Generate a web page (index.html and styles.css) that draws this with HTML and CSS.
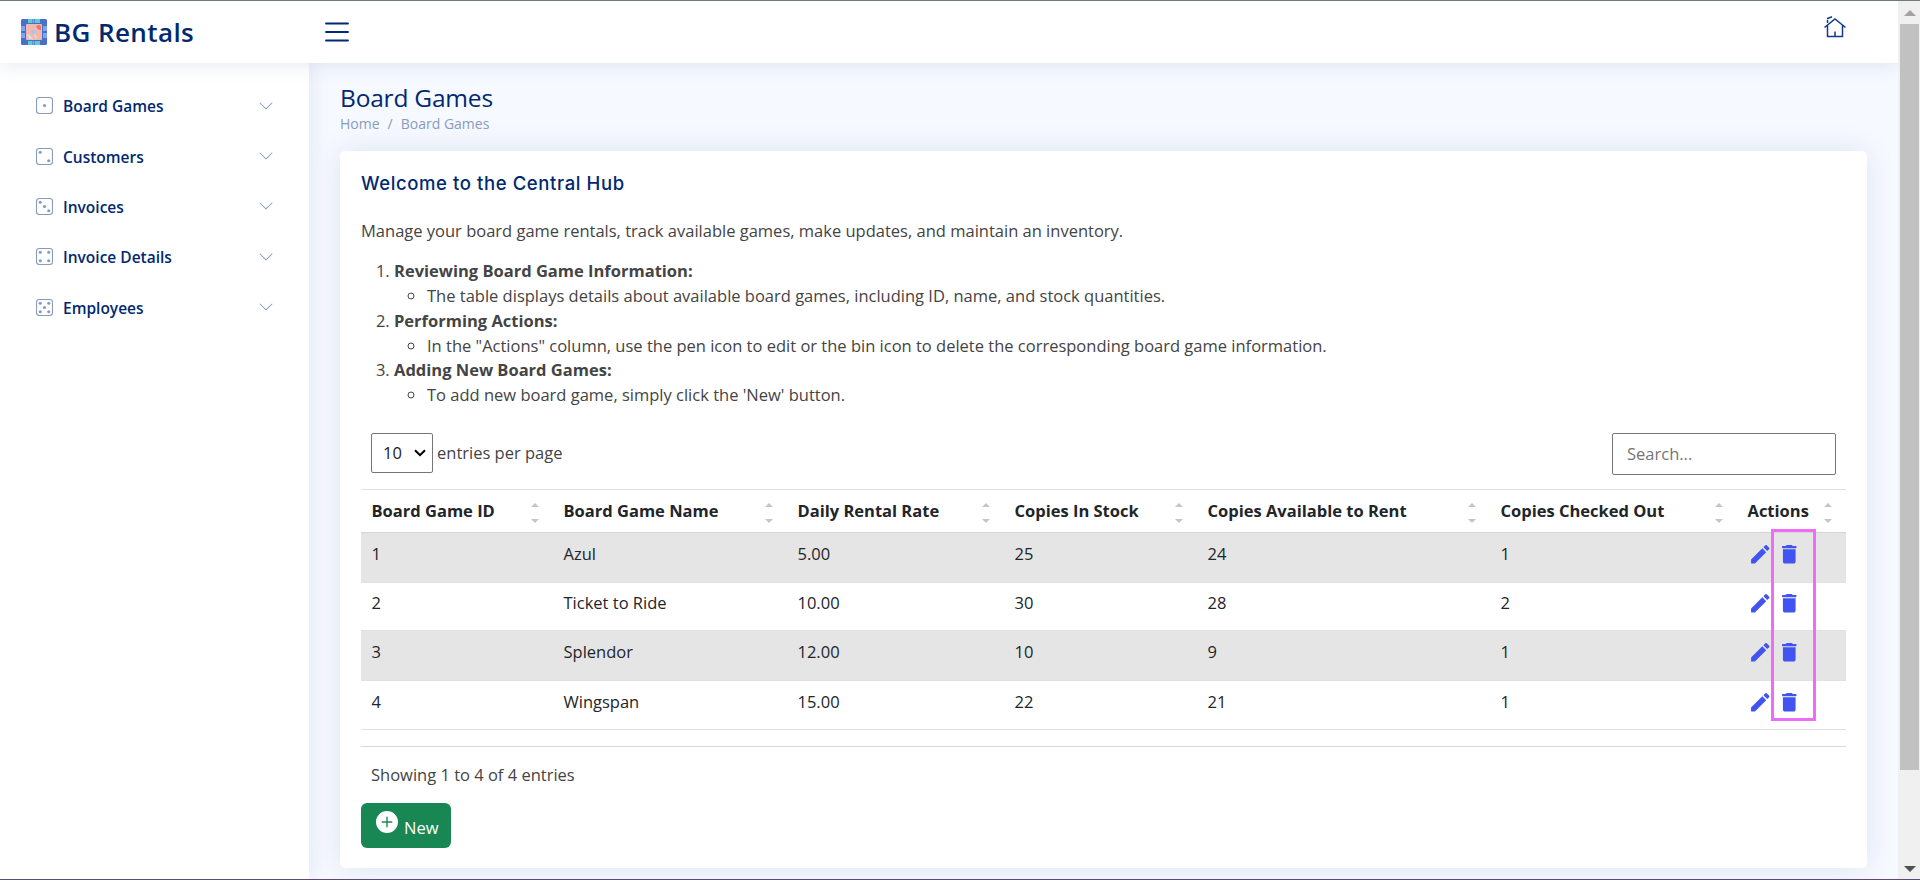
FILE: index.html
```html
<!DOCTYPE html>
<html lang="en">
<head>
<meta charset="utf-8">
<title>BG Rentals</title>
<link rel="stylesheet" href="styles.css">
</head>
<body>
<svg class="sprite" aria-hidden="true">
  <symbol id="chevron" viewBox="0 0 16 16"><path fill-rule="evenodd" d="M1.646 4.646a.5.5 0 0 1 .708 0L8 10.293l5.646-5.647a.5.5 0 0 1 .708.708l-6 6a.5.5 0 0 1-.708 0l-6-6a.5.5 0 0 1 0-.708z"/></symbol>
  <symbol id="die" viewBox="0 0 16 16"><path d="M13 1a2 2 0 0 1 2 2v10a2 2 0 0 1-2 2H3a2 2 0 0 1-2-2V3a2 2 0 0 1 2-2h10zM3 0a3 3 0 0 0-3 3v10a3 3 0 0 0 3 3h10a3 3 0 0 0 3-3V3a3 3 0 0 0-3-3H3z"/></symbol>
  <symbol id="pencil" viewBox="0 0 24 24"><path d="M3 17.25V21h3.75L17.81 9.94l-3.75-3.75L3 17.25zM20.71 7.04a1 1 0 0 0 0-1.41l-2.34-2.34a1 1 0 0 0-1.41 0l-1.83 1.83 3.75 3.75 1.83-1.83z"/></symbol>
  <symbol id="bin" viewBox="0 0 24 24"><path d="M5.800 19c0 1.200.8 2 2 2h8.400c1.200 0 2-.8 2-2V7H5.800v12zM19 4h-3.500l-1-1h-5l-1 1H5v2h14V4z"/></symbol>
</svg>
<div class="window">
  <div class="page">
    <header class="header">
      <a class="logo">
        <svg class="logo-img" viewBox="0 0 26 26">
          <rect width="26" height="26" rx="1.500" fill="#4a6fc8"/>
          <path fill="#56cfd0" d="M7 0h4.500v4H7zM14 0h5v4h-5zM7 22h4.500v4H7zM14 22h5v4h-5z"/>
          <path fill="#79a6f2" d="M0 7h4v5H0zM0 14h4v5H0zM22 7h4v5h-4zM22 14h4v5h-4zM12 0h1.500v4H12zM12 22h1.500v4H12z"/>
          <rect x="5" y="5" width="16" height="16" rx="1" fill="#f2b8ae"/>
          <path fill="#e8796f" d="M15 7q3-2 5 0v4l-3-.5z"/>
          <circle cx="12.500" cy="13" r="2.300" fill="#a9c4ee"/>
          <path fill="#d5dcf4" d="M6 15l3 1 3 4H8zM13 14l3 4-2 1z"/>
          <path fill="#e8c860" d="M16 13l2 4-2 1z"/>
        </svg>
        <span class="logo-text">BG Rentals</span>
      </a>
      <svg class="burger" viewBox="0 0 24 20"><path d="M1 1.500h22M1 10h22M1 18.500h22"/></svg>
      <svg class="house" viewBox="0 0 24 24"><path d="M1.500 12.500 12 4l10.500 8.500M4.500 10.500V21.500h15V10.500M12 21.500v-5M4.500 8V5M4 3.800l5-2"/></svg>
    </header>
    <div class="body">
      <nav class="sidebar">
        <a class="nav-item"><svg class="die" viewBox="0 0 16 16"><use href="#die"/><circle cx="8" cy="8" r="1.500"/></svg><span>Board Games</span><svg class="chev"><use href="#chevron"/></svg></a>
        <a class="nav-item"><svg class="die" viewBox="0 0 16 16"><use href="#die"/><circle cx="4" cy="4" r="1.500"/><circle cx="12" cy="12" r="1.500"/></svg><span>Customers</span><svg class="chev"><use href="#chevron"/></svg></a>
        <a class="nav-item"><svg class="die" viewBox="0 0 16 16"><use href="#die"/><circle cx="4" cy="4" r="1.500"/><circle cx="8" cy="8" r="1.500"/><circle cx="12" cy="12" r="1.500"/></svg><span>Invoices</span><svg class="chev"><use href="#chevron"/></svg></a>
        <a class="nav-item"><svg class="die" viewBox="0 0 16 16"><use href="#die"/><circle cx="4" cy="4" r="1.500"/><circle cx="12" cy="4" r="1.500"/><circle cx="4" cy="12" r="1.500"/><circle cx="12" cy="12" r="1.500"/></svg><span>Invoice Details</span><svg class="chev"><use href="#chevron"/></svg></a>
        <a class="nav-item"><svg class="die" viewBox="0 0 16 16"><use href="#die"/><circle cx="4" cy="4" r="1.500"/><circle cx="12" cy="4" r="1.500"/><circle cx="8" cy="8" r="1.500"/><circle cx="4" cy="12" r="1.500"/><circle cx="12" cy="12" r="1.500"/></svg><span>Employees</span><svg class="chev"><use href="#chevron"/></svg></a>
      </nav>
      <main class="main">
        <h1 class="title">Board Games</h1>
        <div class="crumbs"><span>Home</span><span>/</span><span>Board Games</span></div>
        <section class="card">
          <h2 class="card-title">Welcome to the Central Hub</h2>
          <p class="intro">Manage your board game rentals, track available games, make updates, and maintain an inventory.</p>
          <ol class="steps">
            <li><strong>Reviewing Board Game Information:</strong><ul><li>The table displays details about available board games, including ID, name, and stock quantities.</li></ul></li>
            <li><strong>Performing Actions:</strong><ul><li>In the "Actions" column, use the pen icon to edit or the bin icon to delete the corresponding board game information.</li></ul></li>
            <li><strong>Adding New Board Games:</strong><ul><li>To add new board game, simply click the 'New' button.</li></ul></li>
          </ol>
          <div class="controls">
            <div class="select"><span>10</span><svg viewBox="0 0 12 8"><path d="M1 1.200 6 6.200l5-5"/></svg></div>
            <span class="per-page">entries per page</span>
            <div class="search">Search...</div>
          </div>
          <div class="table-wrap">
            <table class="games">
              <colgroup><col class="c1"><col class="c2"><col class="c3"><col class="c4"><col class="c5"><col class="c6"><col class="c7"></colgroup>
              <thead><tr>
                <th><div class="th"><span>Board Game ID</span><i class="sort"></i></div></th>
                <th><div class="th"><span>Board Game Name</span><i class="sort"></i></div></th>
                <th><div class="th"><span>Daily Rental Rate</span><i class="sort"></i></div></th>
                <th><div class="th"><span>Copies In Stock</span><i class="sort"></i></div></th>
                <th><div class="th"><span>Copies Available to Rent</span><i class="sort"></i></div></th>
                <th><div class="th"><span>Copies Checked Out</span><i class="sort"></i></div></th>
                <th><div class="th"><span>Actions</span><i class="sort"></i></div></th>
              </tr></thead>
              <tbody>
                <tr class="r1"><td>1</td><td>Azul</td><td>5.00</td><td>25</td><td>24</td><td>1</td><td><div class="actions"><svg><use href="#pencil"/></svg><svg><use href="#bin"/></svg></div></td></tr>
                <tr class="r2"><td>2</td><td>Ticket to Ride</td><td>10.00</td><td>30</td><td>28</td><td>2</td><td><div class="actions"><svg><use href="#pencil"/></svg><svg><use href="#bin"/></svg></div></td></tr>
                <tr class="r3"><td>3</td><td>Splendor</td><td>12.00</td><td>10</td><td>9</td><td>1</td><td><div class="actions"><svg><use href="#pencil"/></svg><svg><use href="#bin"/></svg></div></td></tr>
                <tr class="r4"><td>4</td><td>Wingspan</td><td>15.00</td><td>22</td><td>21</td><td>1</td><td><div class="actions"><svg><use href="#pencil"/></svg><svg><use href="#bin"/></svg></div></td></tr>
              </tbody>
            </table>
            <div class="highlight"></div>
          </div>
          <div class="info">Showing 1 to 4 of 4 entries</div>
          <button class="new"><svg viewBox="0 0 16 16"><path d="M16 8A8 8 0 1 1 0 8a8 8 0 0 1 16 0zM8.500 4.500a.5.5 0 0 0-1 0v3h-3a.5.5 0 0 0 0 1h3v3a.5.5 0 0 0 1 0v-3h3a.5.5 0 0 0 0-1h-3v-3z"/></svg><span>New</span></button>
        </section>
      </main>
    </div>
  </div>
  <div class="scrollbar"><i class="arrow-up"></i><i class="thumb"></i><i class="arrow-down"></i></div>
</div>
</body>
</html>
```
FILE: styles.css
```css
* { box-sizing: border-box; }
body { margin: 0; font: 16.5px/24.75px "Open Sans", sans-serif; color: #444; background: #f6f9ff; }
.sprite { display: none; }
.window { display: grid; grid-template-columns: 1898px 22px; height: 880px; overflow: hidden; border-top: 1px solid #6c7c82; border-bottom: 1px solid #5d4a75; }
.page { display: flex; flex-direction: column; min-height: 0; overflow: hidden; }
.header { height: 62px; flex: none; display: flex; align-items: center; background: #fff; box-shadow: 0 2px 20px rgba(1, 41, 112, .1); z-index: 2; padding: 0 51px 0 21px; }
.logo { display: flex; align-items: center; width: 303.500px; }
.logo-img { width: 26px; height: 26px; }
.logo-text { font: 600 26px/32px "Open Sans", sans-serif; color: #012970; margin-left: 7px; letter-spacing: .4px; margin-top: -1px; }
.burger { width: 24px; height: 20px; stroke: #012970; stroke-width: 1.8; stroke-linecap: round; fill: none; }
.house { width: 24px; height: 24px; margin: -10px 0 0 auto; fill: none; stroke: #14388a; stroke-width: 1.5; }
.body { display: flex; flex: 1; min-height: 0; }
.sidebar { width: 309px; flex: none; background: #fff; box-shadow: 0 0 20px rgba(1, 41, 112, .1); padding: 17.500px 35px 0 36px; z-index: 1; }
.nav-item { display: flex; align-items: center; height: 50.4px; color: #012970; font-weight: 600; font-size: 15.5px; }
.nav-item span { margin-top: 2px; }
.die { width: 17px; height: 17px; fill: #899bbd; margin-right: 10px; }
.chev { width: 16px; height: 16px; fill: #899bbd; margin-left: auto; }
.main { flex: 1; padding: 21px 31px 0; }
.title { margin: 0; font: 400 24.5px/28px "Open Sans", sans-serif; color: #012970; letter-spacing: -.2px; }
.crumbs { display: flex; gap: 8px; margin-top: 1px; height: 20px; line-height: 21px; font-size: 14px; color: #899bbd; }
.card { margin-top: 18px; height: 717px; background: #fff; border-radius: 5px; box-shadow: 0 0 30px rgba(1, 41, 112, .1); padding: 20px 21px; }
.card-title { margin: 0; font: 500 18.5px/25px Inter, sans-serif; letter-spacing: .6px; color: #012970; }
.intro { margin: 22.500px 0 16px; }
.steps { margin: 0; padding-left: 33px; }
.steps ul { margin: 0; padding-left: 33px; }
.controls { display: flex; align-items: flex-start; height: 56px; margin-top: 25.500px; padding: 0 10px; }
.select { display: flex; align-items: center; width: 62px; height: 40px; border: 1px solid #767676; border-radius: 2px; padding: 0 6px 0 11px; color: #222; justify-content: space-between; }
.select svg { width: 12px; height: 8px; fill: none; stroke: #000; stroke-width: 2; }
.per-page { margin: 8px 0 0 4px; }
.search { margin-left: auto; width: 224px; height: 42px; border: 1px solid #767676; border-radius: 2px; padding: 0 14px; line-height: 40px; color: #757575; }
.table-wrap { position: relative; height: 258px; border-bottom: 1px solid #d9d9d9; }
.games { width: 1485px; table-layout: fixed; border-collapse: separate; border-spacing: 0; color: #212529; border-top: 1px solid #dee2e6; }
.c1 { width: 192px; } .c2 { width: 234px; } .c3 { width: 217px; } .c4 { width: 193px; } .c5 { width: 293px; } .c6 { width: 247px; } .c7 { width: 109px; }
th { height: 43px; padding: 0 14px 0 10.500px; border-bottom: 1px solid #d4d5d7; text-align: left; }
.th { display: flex; justify-content: space-between; align-items: center; white-space: nowrap; }
.sort { display: flex; flex-direction: column; justify-content: space-between; width: 8px; height: 20px; margin-top: 3px; }
.sort::before, .sort::after { content: ""; border: 4px solid transparent; }
.sort::before { border-bottom-color: #c5c5c5; border-top: 0; }
.sort::after { border-top-color: #c5c5c5; border-bottom: 0; }
td { padding: 9px 10px 0 10.500px; vertical-align: top; border-bottom: 1px solid #dee2e6; }
.r1, .r3 { background: #e5e5e5; }
.r1, .r3 { height: 50px; } .r2 { height: 48px; } .r4 { height: 49px; }
.actions { display: flex; gap: 5px; height: 25px; align-items: center; margin-top: -1px; }
.r2 td, .r2 .actions { padding-top: 8px; }
.r2 .actions { padding-top: 0; margin-top: -1px; }
.actions svg { width: 24.500px; height: 24.500px; fill: #4154f1; flex: none; }
.highlight { position: absolute; left: 1410px; top: 40px; width: 45px; height: 192px; border: 3px solid #ee6cf8; }
.info { margin: 16px 10px 15px; height: 25px; }
.new { display: flex; width: 90px; height: 45px; padding: 8px 0 0 15px; border: 0; border-radius: 6px; background: #198754; color: #fff; font: 16.5px/24.75px "Open Sans", sans-serif; }
.new svg { width: 22px; height: 22px; fill: #fff; margin-right: 6px; }
.new span { margin-top: 5px; }
.scrollbar { background: #f0f0f0; display: flex; flex-direction: column; align-items: center; padding: 9px 0 7px 1px; }
.arrow-up { border: 6px solid transparent; border-top: 0; border-bottom-color: #a3a3a3; }
.thumb { width: 19px; height: 746px; margin-top: 8px; background: #c1c1c1; }
.arrow-down { border: 6px solid transparent; border-bottom: 0; border-top-color: #505050; margin-top: auto; }
```
